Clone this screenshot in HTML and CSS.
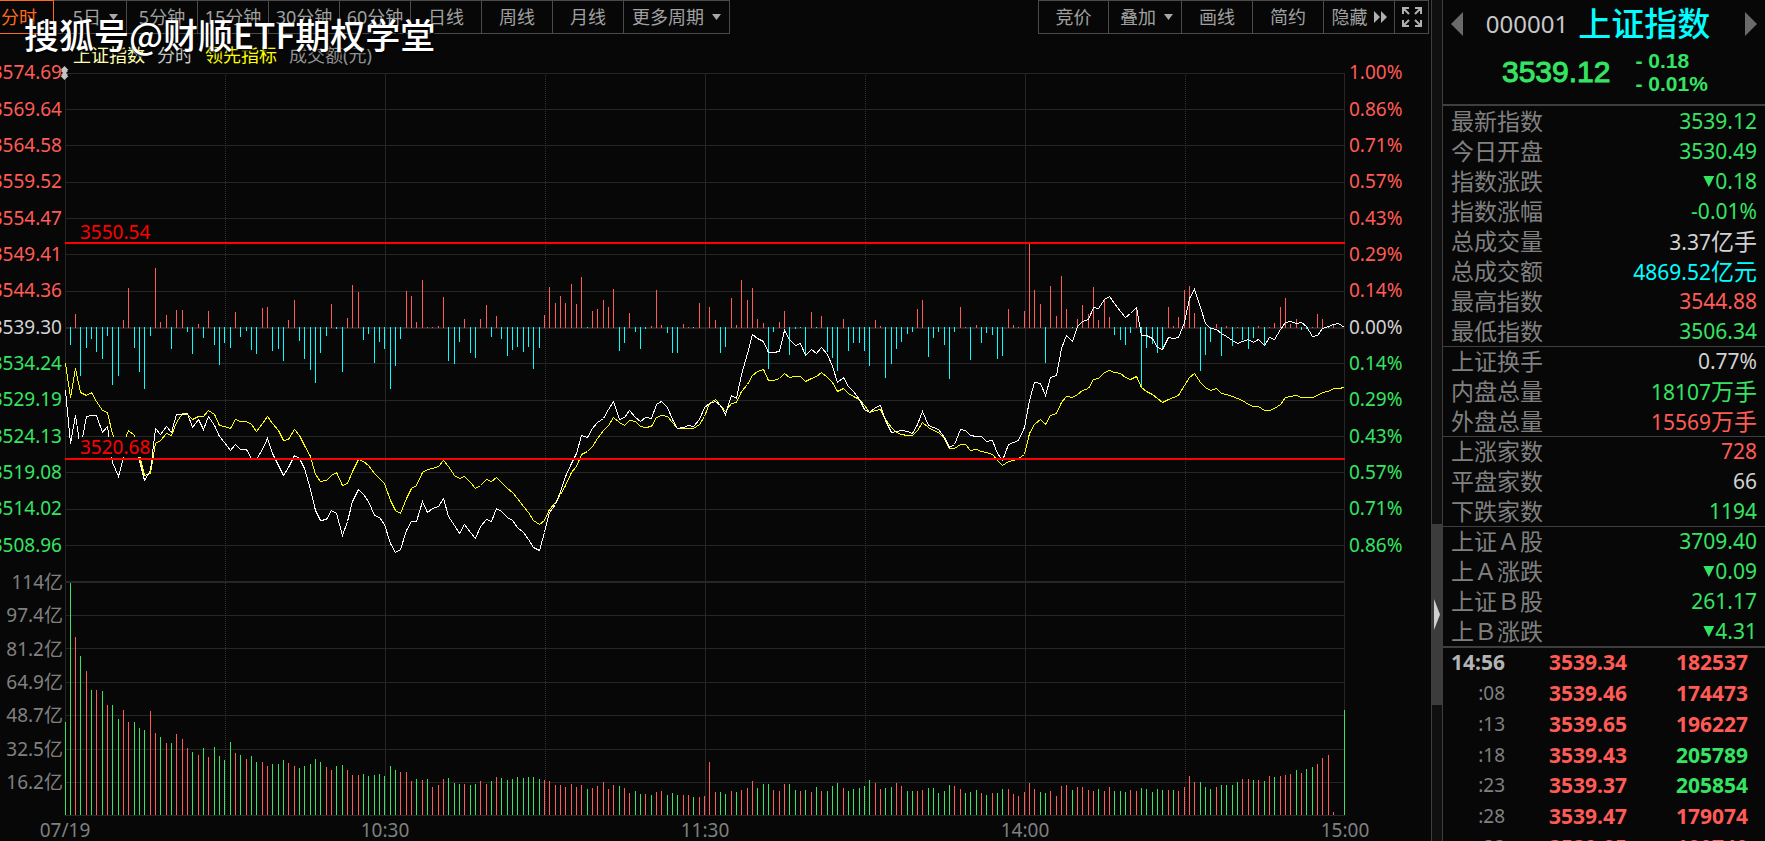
FILE: index.html
```html
<!DOCTYPE html>
<html lang="zh-CN">
<head>
<meta charset="utf-8">
<title>上证指数 000001</title>
<link rel="stylesheet" href="styles.css">
</head>
<body>
<div class="app">
  <main class="main">
    <nav class="toolbar">
      <div class="group periods">
        <button class="btn active first">分时</button>
        <button class="btn btn-day">5日<i class="caret"></i></button>
        <button class="btn">5分钟</button>
        <button class="btn">15分钟</button>
        <button class="btn">30分钟</button>
        <button class="btn">60分钟</button>
        <button class="btn">日线</button>
        <button class="btn">周线</button>
        <button class="btn">月线</button>
        <button class="btn btn-more">更多周期<i class="caret"></i></button>
      </div>
      <div class="group tools">
        <button class="btn">竞价</button>
        <button class="btn btn-day">叠加<i class="caret"></i></button>
        <button class="btn">画线</button>
        <button class="btn">简约</button>
        <button class="btn">隐藏<svg class="ff" viewBox="0 0 14 12"><path d="M1 0 7 6 1 12ZM8 0 14 6 8 12Z"/></svg></button>
        <button class="btn btn-full" aria-label="全屏"><svg class="full" viewBox="0 0 22 22"><path d="M2 8V2H8M2.500 2.500 8 8M14 2H20V8M19.500 2.500 14 8M2 14V20H8M2.500 19.500 8 14M14 20H20V14M19.500 19.500 14 14"/></svg></button>
      </div>
    </nav>
    <div class="legend">
      <span class="lg-name">上证指数</span>
      <span class="lg-kind">分时</span>
      <span class="lg-lead">领先指标</span>
      <span class="lg-vol">成交额(元)</span>
    </div>
    <div class="watermark">搜狐号@财顺ETF期权学堂</div>
    <section class="chart">
      <div class="axis price-axis">
        <span class="up">3574.69</span><span class="up">3569.64</span><span class="up">3564.58</span><span class="up">3559.52</span><span class="up">3554.47</span><span class="up">3549.41</span><span class="up">3544.36</span><span class="flat">3539.30</span><span class="down">3534.24</span><span class="down">3529.19</span><span class="down">3524.13</span><span class="down">3519.08</span><span class="down">3514.02</span><span class="down">3508.96</span>
      </div>
      <div class="plot">
        <svg id="plot" viewBox="0 0 1280 743" preserveAspectRatio="none"></svg>
        <span class="level level-high">3550.54</span>
        <span class="level level-low">3520.68</span>
        <svg class="grip" viewBox="0 0 8 14"><path d="M4 0 8 4H7V6H6V8H7V10H8L4 14 0 10H1V8H2V6H1V4H0Z"/></svg>
      </div>
      <div class="axis pct-axis">
        <span class="up">1.00%</span><span class="up">0.86%</span><span class="up">0.71%</span><span class="up">0.57%</span><span class="up">0.43%</span><span class="up">0.29%</span><span class="up">0.14%</span><span class="flat">0.00%</span><span class="down">0.14%</span><span class="down">0.29%</span><span class="down">0.43%</span><span class="down">0.57%</span><span class="down">0.71%</span><span class="down">0.86%</span>
      </div>
      <div class="axis vol-axis">
        <span>114亿</span><span>97.4亿</span><span>81.2亿</span><span>64.9亿</span><span>48.7亿</span><span>32.5亿</span><span>16.2亿</span>
      </div>
      <div class="times">
        <span>07/19</span><span>10:30</span><span>11:30</span><span>14:00</span><span>15:00</span>
      </div>
    </section>
  </main>
  <div class="splitter"><div class="thumb"><i></i></div></div>
  <aside class="side">
    <header class="quote">
      <div class="title">
        <button class="arrow prev" aria-label="上一个"></button>
        <h1><span class="code">000001</span><span class="name">上证指数</span></h1>
        <button class="arrow next" aria-label="下一个"></button>
      </div>
      <div class="now">
        <span class="last">3539.12</span>
        <span class="chg"><span>- 0.18</span><span>- 0.01%</span></span>
      </div>
    </header>
    <table class="stats">
      <tbody>
      <tr><th>最新指数</th><td class="down">3539.12</td></tr>
      <tr><th>今日开盘</th><td class="down">3530.49</td></tr>
      <tr><th>指数涨跌</th><td class="down"><i class="tri"></i>0.18</td></tr>
      <tr><th>指数涨幅</th><td class="down">-0.01%</td></tr>
      <tr><th>总成交量</th><td class="flat">3.37<b>亿手</b></td></tr>
      <tr><th>总成交额</th><td class="cyan">4869.52<b>亿元</b></td></tr>
      <tr><th>最高指数</th><td class="up">3544.88</td></tr>
      <tr><th>最低指数</th><td class="down">3506.34</td></tr>
      </tbody>
      <tbody>
      <tr><th>上证换手</th><td class="flat">0.77%</td></tr>
      <tr><th>内盘总量</th><td class="down">18107<b>万手</b></td></tr>
      <tr><th>外盘总量</th><td class="up">15569<b>万手</b></td></tr>
      </tbody>
      <tbody>
      <tr><th>上涨家数</th><td class="up">728</td></tr>
      <tr><th>平盘家数</th><td class="flat">66</td></tr>
      <tr><th>下跌家数</th><td class="down">1194</td></tr>
      </tbody>
      <tbody>
      <tr><th>上证Ａ股</th><td class="down">3709.40</td></tr>
      <tr><th>上Ａ涨跌</th><td class="down"><i class="tri"></i>0.09</td></tr>
      <tr><th>上证Ｂ股</th><td class="down">261.17</td></tr>
      <tr><th>上Ｂ涨跌</th><td class="down"><i class="tri"></i>4.31</td></tr>
      </tbody>
    </table>
    <table class="ticks">
      <tr><th class="minute">14:56</th><td class="up">3539.34</td><td class="up">182537</td></tr>
      <tr><th>:08</th><td class="up">3539.46</td><td class="up">174473</td></tr>
      <tr><th>:13</th><td class="up">3539.65</td><td class="up">196227</td></tr>
      <tr><th>:18</th><td class="up">3539.43</td><td class="down">205789</td></tr>
      <tr><th>:23</th><td class="up">3539.37</td><td class="down">205854</td></tr>
      <tr><th>:28</th><td class="up">3539.47</td><td class="up">179074</td></tr>
      <tr><th>:33</th><td class="up">3539.85</td><td class="up">180740</td></tr>
    </table>
  </aside>
</div>
<script src="chart.js"></script>
</body>
</html>
```
FILE: styles.css
```css
* { box-sizing: border-box; }
:root {
  --bg: #070707;
  --line: #3e3e3e;
  --up: #ff5b56;
  --down: #35e463;
  --flat: #d2d2d2;
  --muted: #808080;
  --red: #ff0000;
}
html, body { height: 100%; margin: 0; }
body {
  background: var(--bg);
  color: var(--muted);
  font-family: "Noto Sans", "Noto Sans CJK SC", sans-serif;
  font-size: 19px;
  overflow: hidden;
}
button { font: inherit; color: inherit; background: none; border: 0; padding: 0; margin: 0; }
i { font-style: normal; }
.up { color: var(--up); }
.down { color: var(--down); }
.flat { color: var(--flat); }
.cyan { color: #00ffff; }

.app { display: flex; height: 100vh; overflow: hidden; }
.main { position: relative; flex: 1; min-width: 0; display: flex; flex-direction: column; }

.toolbar { display: flex; justify-content: space-between; height: 34px; padding-right: 2px; }
.group { display: flex; }
.btn {
  display: flex;
  align-items: center;
  justify-content: center;
  width: 71px;
  border: 1px solid #4a4a4a;
  border-left: 0;
  color: #a0a0a0;
  font-size: 18px;
  line-height: 24px;
  white-space: nowrap;
}
.tools .btn:first-child { border-left: 1px solid #4a4a4a; }
.btn.first { width: 54px; padding-left: 1px; justify-content: flex-start; }
.btn.active { border-color: #ff6a1a; color: #ff6a1a; }
.btn-day { width: 73px; padding-right: 8px; justify-content: flex-end; }
.btn-more { width: 106px; padding-right: 8px; justify-content: flex-end; }
.btn-full { width: 34px; }
.caret {
  width: 9px;
  height: 6px;
  margin-left: 8px;
  background: #a8a8a8;
  clip-path: polygon(0 0, 100% 0, 50% 100%);
}
.ff { width: 14px; height: 12px; margin-left: 5px; fill: #b0b0b0; }
.full { width: 22px; height: 22px; fill: none; stroke: #b0b0b0; stroke-width: 2; }

.legend {
  display: flex;
  align-items: center;
  gap: 12px;
  height: 39px;
  padding: 2px 0 0 73px;
  font-size: 18px;
  line-height: 24px;
}
.lg-name { color: #ffffb0; }
.lg-kind { color: #c8c8c8; }
.lg-lead { color: #ffff00; }
.lg-vol { color: #909090; }
.watermark {
  position: absolute;
  left: 24px;
  top: 13px;
  color: #ffffff;
  font-family: "Noto Sans CJK SC", sans-serif;
  font-size: 35px;
  line-height: 42px;
  font-weight: 500;
  white-space: nowrap;
  text-shadow: 1px 2px 2px #000000;
}

.chart {
  flex: 1;
  min-height: 0;
  display: grid;
  grid-template-columns: 65px minmax(0, 1fr) 86px;
  grid-template-rows: minmax(0, 509fr) minmax(0, 234fr) 25px;
}
.axis { display: flex; flex-direction: column; line-height: 26px; white-space: nowrap; }
.axis span { flex: 1; display: flex; align-items: center; justify-content: flex-end; }
.price-axis { grid-area: 1 / 1; margin: -19px 3px 19px 0; }
.vol-axis { grid-area: 2 / 1; margin: -17px 2px 17px 0; }
.pct-axis { grid-area: 1 / 3; margin: -19px 0 19px 4px; }
.pct-axis span { justify-content: flex-start; }
.plot { grid-area: 1 / 2 / 3 / 3; position: relative; min-height: 0; }
.plot #plot { display: block; width: 100%; height: 100%; shape-rendering: crispEdges; }
.grip { position: absolute; left: -5px; top: -7px; width: 9px; height: 14px; fill: #c4c4c4; }
.level {
  position: absolute;
  left: 14px;
  padding: 0 1px;
  background: var(--bg);
  color: var(--red);
  line-height: 20px;
}
.level-high { top: 20%; }
.level-low { top: 49%; }
.times { grid-area: 3 / 2; display: flex; justify-content: space-between; line-height: 28px; }
.times span { width: 0; display: flex; justify-content: center; }

.splitter {
  width: 12px;
  background: #101010;
  border: solid var(--line);
  border-width: 0 1px;
  display: flex;
  flex-direction: column;
}
.thumb {
  height: 181px;
  margin: 524px 0 0;
  background: #3c3c3c;
  display: flex;
  align-items: center;
  justify-content: center;
}
.thumb i { width: 6px; height: 31px; background: #d0d0d0; clip-path: polygon(0 0, 100% 50%, 0 100%); }

.side { width: 322px; overflow: hidden; }
.quote { height: 106px; border-bottom: 2px solid var(--line); }
.title { display: flex; align-items: center; justify-content: space-between; height: 48px; padding: 0 8px; }
.title h1 { display: flex; align-items: center; gap: 10px; margin: 0; padding-right: 12px; font-weight: 400; }
.code { color: #c8c8c8; font-size: 24px; line-height: 30px; }
.name { color: #00ffff; font-size: 33px; line-height: 40px; font-weight: 500; }
.arrow { width: 12px; height: 24px; background: #6a6a6a; }
.prev { clip-path: polygon(100% 0, 100% 100%, 0 50%); }
.next { clip-path: polygon(0 0, 100% 50%, 0 100%); }
.now {
  display: flex;
  align-items: center;
  gap: 25px;
  height: 48px;
  padding-left: 59px;
  color: var(--down);
  font-family: "Liberation Sans", Arial, sans-serif;
}
.last { font-size: 30px; line-height: 40px; -webkit-text-stroke: 1px var(--down); }
.chg { display: flex; flex-direction: column; font-size: 21px; line-height: 23px; font-weight: 700; }

table { width: 100%; border-spacing: 0; }
th, td { padding: 0; white-space: nowrap; }
.stats th, .stats td { height: 30px; line-height: 28px; }
.stats tbody + tbody tr:first-child > * { border-top: 1px solid var(--line); line-height: 26px; padding-bottom: 2px; }
.stats th { padding-left: 8px; text-align: left; font-size: 23px; font-weight: 400; color: var(--muted); }
.stats td { padding-right: 8px; text-align: right; font-size: 21px; }
.stats b { font-weight: 400; font-size: 23px; }
.tri {
  display: inline-block;
  width: 11px;
  height: 11px;
  margin-right: 1px;
  vertical-align: 2px;
  background: currentColor;
  clip-path: polygon(0 0, 100% 0, 50% 100%);
}
.ticks { border-top: 2px solid var(--line); table-layout: fixed; }
.ticks th, .ticks td { height: 31px; line-height: 28px; text-align: right; vertical-align: top; font-size: 21px; font-weight: 700; }
.ticks tr:nth-child(4n) > * { height: 30px; }
.ticks th { width: 62px; font-size: 19px; font-weight: 400; color: var(--muted); }
.ticks th.minute { font-size: 21px; font-weight: 700; color: #b4b4b4; }
.ticks td { width: 122px; }
.ticks td:last-child { width: 138px; padding-right: 17px; }
```
FILE: chart.js
```js
const STEP = 1279 / 240;
const ZERO = 254;
const BASE = 742;

// Buying / selling strength per minute, signed around the 0.00% line.
const strength = [0,-18,14,-49,-21,-12,-25,-32,-9,-58,-49,8,40,-21,-45,-62,-9,60,6,13,-22,18,18,-5,-27,4,-11,17,-18,-38,-16,
-21,16,-10,-4,-23,-27,20,21,-24,-22,-34,8,28,-14,-32,-43,-56,-26,-9,24,-2,-45,10,43,36,-13,-7,-36,-15,-22,
-62,-39,-12,37,32,6,48,1,1,2,31,-34,-37,-15,9,-26,-31,9,23,-10,12,-12,-29,-23,-20,-25,-20,-42,-21,13,
41,25,32,25,44,24,51,-1,17,19,28,21,39,-24,-16,15,-5,-22,-2,2,38,3,-6,-26,-26,4,1,-1,25,0,
21,8,-26,-20,30,3,48,28,40,9,5,-42,-5,6,17,-28,-2,-1,-27,16,-1,12,-25,-31,-44,9,-24,-16,-16,-24,
-39,8,2,-51,-37,-22,-15,-7,-5,19,28,-30,-11,-5,-18,-52,-5,21,1,-33,3,-16,-6,-8,-32,-29,19,3,1,17,
84,38,24,-36,42,12,52,19,-1,9,23,14,41,8,28,11,-8,-13,-18,-6,18,-60,-21,-17,-26,-22,21,2,11,38,
42,15,-44,-28,-15,4,-29,2,-19,1,-13,-22,-11,2,-19,1,5,21,30,4,9,-3,-2,1,14,9,-1,3,0,0];

// Index line, one y value per minute.
const index = [390,443,415,448,416,415,415,432,426,462,476,457,443,447,460,480,470,428,434,426,432,414,414,413,427,419,429,416,425,436,442,
450,444,449,449,458,459,449,438,453,465,475,467,455,458,468,489,510,520,519,510,513,535,521,501,489,494,501,515,517,524,
543,552,549,530,521,521,501,512,508,506,498,516,525,533,524,532,538,526,519,521,508,511,517,520,527,532,539,547,550,532,
512,504,491,476,463,453,435,437,428,422,418,409,401,419,417,410,417,421,417,418,404,401,407,419,428,427,425,426,419,407,
403,401,405,414,395,398,374,353,334,338,341,352,352,351,330,339,345,343,355,349,353,347,354,366,382,377,386,391,399,409,
412,407,405,420,432,431,430,431,433,424,411,425,427,429,437,447,444,429,430,435,436,436,441,440,453,460,444,442,440,427,
400,382,383,395,377,375,348,335,341,326,321,319,307,308,299,296,303,311,317,313,307,335,335,338,347,349,337,338,337,322,
298,289,307,323,328,329,333,336,340,343,341,339,342,339,345,337,339,329,322,321,323,322,326,336,335,328,326,324,323,327];

// Leading indicator line.
const lead = [363,397,368,392,395,392,401,410,412,434,443,443,430,435,455,475,473,443,440,433,435,422,413,414,419,416,416,410,414,425,426,
428,419,421,421,424,431,423,416,423,430,440,439,429,435,445,456,474,481,480,475,472,485,483,471,459,461,465,473,478,483,
500,510,513,498,488,485,472,469,468,466,460,466,475,478,476,482,488,485,479,481,477,482,488,492,498,506,512,520,524,520,
509,502,494,485,472,466,454,451,446,438,430,425,417,422,425,420,421,426,427,426,417,415,416,422,428,428,428,428,424,416,
403,399,405,411,403,402,391,384,375,371,369,380,380,378,373,377,376,376,381,378,376,372,377,382,391,388,393,396,399,405,
412,410,409,419,427,432,434,435,435,430,422,427,430,432,438,448,448,444,444,450,449,451,452,454,460,465,461,460,458,454,
433,424,419,424,415,413,402,396,397,394,390,388,379,378,372,370,372,373,377,379,376,387,391,394,398,402,399,397,395,385,
377,373,382,387,390,388,393,394,396,398,400,404,406,406,410,410,408,404,397,396,395,397,397,397,395,392,391,388,388,387];

// Turnover per minute; negative values are falling minutes.
const volume = [-93,-232,178,-159,144,-125,125,-124,110,-110,-96,105,93,-93,-87,-85,104,82,-78,72,-72,81,76,67,-63,60,-67,58,-68,-59,-55,
-73,62,-60,56,-59,-53,53,49,-51,-51,-55,52,49,-47,-49,-51,-56,-53,48,45,-49,-50,45,40,40,-41,-39,-40,-41,-39,
-49,-45,43,43,34,-36,35,-36,28,30,36,-37,-32,-31,31,-30,-31,34,31,-34,38,-37,-35,-36,-38,-37,-38,-38,-36,35,
34,30,30,28,31,28,30,-26,27,29,33,26,30,-29,27,22,-24,-21,21,-20,23,24,-20,-22,-20,20,20,-18,18,19,
53,23,-23,-21,24,-23,25,27,34,-27,-31,-31,25,24,31,-31,-25,24,-25,23,-28,24,-24,-29,-32,27,-24,-26,-27,-29,
-35,32,26,-27,-28,32,29,-24,-24,24,25,-27,-27,-22,-24,-30,29,26,-22,-23,-25,22,-20,22,-22,-26,26,21,19,23,
32,26,-23,-22,24,19,29,30,-25,28,28,25,24,-26,24,28,-24,-24,-23,25,24,-27,-26,-23,-26,-25,25,-25,24,28,
39,33,-33,-28,-26,28,-30,-30,-30,-33,36,36,-35,35,-34,39,-38,39,40,41,-45,42,-46,-48,51,57,60,3,0,-105];

const x = i => Math.floor(i * STEP);
const rect = (rx, ry, w, h, c) => `<rect x="${rx}" y="${ry}" width="${w}" height="${h}" fill="${c}"/>`;
const trace = (values, c) => `<polyline fill="none" stroke="${c}" stroke-width="1" points="${
  values.map((v, i) => `${x(i) + 0.5},${v - 73 + 0.5}`).join(" ")}"/>`;

const GRID = "#262626";
let out = "";

for (let i = 0; i < 14; i++) {
  out += rect(0, Math.floor(i * 109 / 3), 1280, i === 7 ? 2 : 1, GRID);
}
out += rect(0, 508, 1280, 2, GRID);
for (let k = 1; k <= 7; k++) out += rect(0, Math.round(508.5 + 33.4 * k), 1280, 1, GRID);
for (let q = 0; q <= 8; q++) {
  const gx = Math.min(q * 160, 1279);
  out += q % 2
    ? `<line x1="${gx + 0.5}" x2="${gx + 0.5}" y1="2" y2="742" stroke="#303030" stroke-dasharray="1 1"/>`
    : rect(gx, 0, 1, 743, GRID);
}

strength.forEach((v, i) => {
  if (v > 0) out += rect(x(i), ZERO - v + 1, 1, v, "#ff5b56");
  if (v < 0) out += rect(x(i), ZERO, 1, -v, "#00ffff");
});
volume.forEach((v, i) => {
  const h = Math.abs(v);
  if (h) out += rect(x(i), BASE - h, 1, h, v > 0 ? "#ff5b56" : "#35e463");
});
out += trace(lead, "#ffff00") + trace(index, "#ffffff");
out += rect(0, 169, 1280, 2, "#ff0000") + rect(0, 385, 1280, 2, "#ff0000");

document.getElementById("plot").innerHTML = out;
```
